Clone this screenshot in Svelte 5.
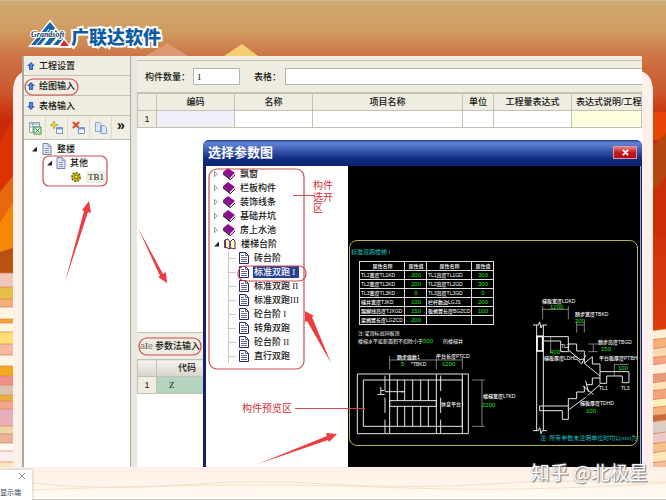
<script>
  const menu = [
    { label: '工程设置', dir: 'up' },
    { label: '绘图输入', dir: 'up' },
    { label: '表格输入', dir: 'down' }
  ]

  const books = ['飘窗', '栏板构件', '装饰线条', '基础井坑', '房上水池']
  const stairs = ['砖台阶', '标准双跑 I', '标准双跑 II', '标准双跑III', '砼台阶 I', '转角双跑', '砼台阶 II', '直行双跑']

  const params = [
    ['TL1宽度TL1KD', '200', 'TL1高度TL1GD', '300'],
    ['TL2宽度TL2KD', '200', 'TL2高度TL2GD', '300'],
    ['TL3宽度TL3KD', '0', 'TL3高度TL3GD', '0'],
    ['梯井宽度TJKD', '100', '栏杆数边LGJS', '200'],
    ['踢脚线高度TJXGD', '150', '板搁置长度BGZCD', '100'],
    ['梁搁置长度LGZCD', '200', '', '']
  ]

  const leftStripes = [
    [273, 14, '#f2c6bb'], [287, 12, '#e8bd48'], [299, 8, '#f6ae78'], [307, 12, '#fff3e2'], [319, 4, '#f5a338'],
    [323, 9, '#fff6dc'], [332, 12, '#ffde78'], [344, 11, '#f5b9a2'], [355, 11, '#fff5e6'], [366, 10, '#f5a91f'],
    [376, 9, '#f0908a'], [385, 10, '#d9c3b0'], [395, 6, '#e6b040'], [401, 8, '#f7a68e'], [409, 17, '#e9afba'],
    [426, 8, '#ecd6a6'], [434, 9, '#e9b497'], [443, 8, '#fff8f4'], [451, 11, '#fdeef0'], [462, 6, '#fbe6bd']
  ]
  const rightStripes = [
    [330, 9, '#fff0d8'], [339, 9, '#f5b07c'], [348, 9, '#fbd8b4'], [357, 7, '#f4a582'], [364, 10, '#fff0dc'],
    [374, 8, '#e89a7c'], [382, 8, '#fde2b8'], [390, 9, '#f2a57a'], [399, 8, '#fff0c0'], [407, 8, '#f3b17c'],
    [415, 6, '#c8693c'], [421, 12, '#d9cdc4'], [433, 10, '#ecc9c9'], [443, 9, '#f4c08c'], [452, 10, '#fde7b6'],
    [462, 8, '#f0bd98']
  ]
</script>

{#snippet arrow(dir)}
  <svg class="icon8 {dir}" viewBox="0 0 8 8"><path d="M4 0 8 4H6v4H2V4H0z" fill="#2f62b8" /><path d="M4 2v5" stroke="#7ea7e8" /></svg>
{/snippet}

{#snippet sheet()}
  <svg class="icon12" viewBox="0 0 12 12"><path d="M2 .5h5l3 3v8H2z" fill="#dde5f5" stroke="#7484a8" /><path d="M7 .5v3h3M4 5.500h4M4 7.500h4M4 9.500h4" fill="none" stroke="#8b9cc2" /></svg>
{/snippet}

{#snippet book()}
  <svg class="icon12" viewBox="0 0 12 12"><path d="M0 4 5 0l7 5-5 5z" fill="#8c0f90" /><path d="m0 4 7 6v2L0 6.500z" fill="#4b1252" /><path d="m7 10 5-5v2l-5 5z" fill="#e9dff0" /><path d="m7 12 5-5" stroke="#4b1252" /></svg>
{/snippet}

{#snippet page()}
  <svg class="icon12" viewBox="0 0 12 12"><path d="M1.500.500h6l3 3v8h-9z" fill="#fff" stroke="#22235f" /><path d="M7.500.500v3h3M3 5.500h6M3 7.500h6M3 9.500h6M3 3.500h3" fill="none" stroke="#3b3d7c" stroke-width=".8" /></svg>
{/snippet}

<div class="slide">
  <svg class="backdrop" viewBox="0 0 666 500" preserveAspectRatio="none" aria-hidden="true">
    <defs>
      <linearGradient id="sky" x1="0" y1="0" x2="0" y2="1">
        <stop offset="0" stop-color="#d0ab72" />
        <stop offset=".06" stop-color="#d09c62" />
        <stop offset=".12" stop-color="#cd6f42" />
        <stop offset=".18" stop-color="#cb5a30" />
        <stop offset=".24" stop-color="#cc2a08" />
        <stop offset=".3" stop-color="#c82a0c" />
        <stop offset=".7" stop-color="#df3d0c" />
      </linearGradient>
      <linearGradient id="floor" x1="0" y1="0" x2="0" y2="1">
        <stop offset="0" stop-color="#fdeee6" />
        <stop offset="1" stop-color="#fffcf2" />
      </linearGradient>
    </defs>
    <rect width="666" height="500" fill="url(#sky)" />
    <path d="M0 0h666v1H0z" fill="#c9bfa2" />
    <path d="m167 43 21 13h-42z" fill="#dc9870" />
    <path d="m242 44 16 12h-34z" fill="#f5cd72" />
    <path d="M0 140 13 120v58L0 192z" fill="#dc3206" />
    <path d="m0 192 13-16v26L0 222z" fill="#e8690c" />
    <path d="m0 222 13-20v56H0z" fill="#f58709" />
    <path d="M0 252l13-4v25H0z" fill="#b95210" />
    <path d="M640 112h26v28h-26z" fill="#ea4509" />
    <path d="m653 145 13-12v46l-13 12z" fill="#b54610" />
    <path d="m653 191 13-14v60h-13z" fill="#cc2f08" />
    {#each leftStripes as [y, h, fill]}
      <path d="M0 {y}h14v{h}H0z" {fill} />
      <path d="M0 {y}h14" stroke="#d98352" stroke-width=".7" />
    {/each}
    {#each rightStripes as [y, h, fill]}
      <path d="M650 {y + 1}l16-2v{h + 1}h-16z" {fill} />
      <path d="M650 {y + 1}l16-2" stroke="#d98352" stroke-width=".7" />
    {/each}
    <path d="M13 470V92q0-22 20-22h600q20 0 20 22v378z" fill="#fdf0eb" />
    <path d="M0 467h666v33H0z" fill="url(#floor)" />
    <path d="M30 483q80 8 150 2t150-1 160 0 176-2M30 490q90-4 180-5t200 3 256-5" fill="none" stroke="#f5e0c4" />
    <path d="M0 499h666v1H0z" fill="#c9c5bd" />
  </svg>

  <header class="brand">
    <svg class="mark" viewBox="0 0 42 28" aria-hidden="true">
      <path d="M1 26 21 1 41 27z" fill="#fff" stroke="#fff" stroke-width="2" />
      <path d="M2 25 21 2l5 6L12 25z" fill="#1762a7" />
      <path d="M15 25 27 10l3 4-9 11zM24 25l8-9 2 3-5 6z" fill="#1762a7" />
      <path d="M7 25 20 9M11 26l13-16" stroke="#fff" />
      <path d="m31 26 4-6 5 6z" fill="#df2530" />
      <text x="2" y="17">Grandsoft</text>
    </svg>
    <h1>广联达软件</h1>
  </header>

  <div class="app">
    <aside class="side">
      {#each menu as item}
        <button class="menu-item">{@render arrow(item.dir)}{item.label}</button>
      {/each}
      <div class="tools">
        <button aria-label="导出表格"><svg viewBox="0 0 14 14"><path d="M1.500 1.500h10v10h-10z" fill="#fff" stroke="#8ba7b8" /><path d="M2 3h9M2 6h9M5 2v9" stroke="#6f9db8" /><path d="M6 6h7v7H6z" fill="#e3f4df" stroke="#358a44" /><path d="m7.500 7.500 4 4m0-4-4 4" stroke="#26833a" /></svg></button>
        <button aria-label="新建"><svg viewBox="0 0 14 14"><path d="m4 0 1 3 3 1-3 1-1 3-1-3-3-1 3-1z" fill="#f5df4a" stroke="#a8901c" stroke-width=".7" /><path d="M6.500 6.500h6v6h-6z" fill="#fff" stroke="#7194cb" /><path d="M7 7.500h5" stroke="#6c9ae0" stroke-width="2" /></svg></button>
        <button aria-label="删除"><svg viewBox="0 0 14 14"><path d="m1 1 6 6m0-6L1 7" stroke="#db4a26" stroke-width="2" /><path d="M6.500 6.500h6v6h-6z" fill="#fff" stroke="#7194cb" /><path d="M7 7.500h5" stroke="#6c9ae0" stroke-width="2" /></svg></button>
        <button aria-label="复制"><svg viewBox="0 0 14 14"><path d="M1.500 1.500h4l2 2v7h-6zM6.500 4.500h4l2 2v6h-6z" fill="#dce7fa" stroke="#89a3d3" /></svg></button>
        <button class="more" aria-label="更多">»</button>
      </div>
      <ul class="tree">
        <li><i class="open"></i>{@render sheet()}整楼</li>
        <li class="lv2"><i class="open"></i>{@render sheet()}其他</li>
        <li class="lv3">
          <svg class="icon12" viewBox="0 0 12 12"><circle cx="6" cy="6" r="4" fill="#e9d91f" stroke="#756b12" stroke-width="2" stroke-dasharray="2 1" /><circle cx="6" cy="6" r="2" fill="none" stroke="#756b12" /></svg>
          <span class="current">TB1</span>
        </li>
      </ul>
    </aside>

    <main class="work">
      <div class="strip"></div>
      <div class="form">
        <label for="count">构件数量：</label>
        <input id="count" class="count" value="1" />
        <label for="sheet">表格：</label>
        <input id="sheet" class="sheet" />
      </div>
      <table class="grid">
        <colgroup><col class="c-no" /><col class="c-code" /><col class="c-code" /><col /><col class="c-unit" /><col class="c-code" /><col class="c-last" /></colgroup>
        <thead>
          <tr><th></th><th>编码</th><th>名称</th><th>项目名称</th><th>单位</th><th>工程量表达式</th><th class="cut">表达式说明/工程</th></tr>
        </thead>
        <tbody>
          <tr><th>1</th><td class="tint"></td><td></td><td></td><td></td><td></td><td class="note"></td></tr>
        </tbody>
      </table>
      <section class="param">
        <div class="param-bar"><span class="ae">a<b>I</b>e</span>参数法输入</div>
        <table class="codes">
          <colgroup><col class="c-no" /><col class="c-name" /><col /></colgroup>
          <thead><tr><th></th><th>代码</th><th></th></tr></thead>
          <tbody><tr><th>1</th><td>Z</td><td></td></tr></tbody>
        </table>
      </section>
    </main>

    <div class="dialog" role="dialog" aria-labelledby="dialog-title">
      <div class="titlebar">
        <h2 id="dialog-title">选择参数图</h2>
        <button class="close" aria-label="关闭"><svg viewBox="0 0 8 8"><path d="m1 1 6 6m0-6L1 7" stroke="#fff" stroke-width="2" /></svg></button>
      </div>
      <div class="dialog-body">
        <ul class="catalog">
          {#each books as name}
            <li><i class="shut"></i>{@render book()}{name}</li>
          {/each}
          <li>
            <i class="open"></i>
            <svg class="icon12" viewBox="0 0 12 12"><path d="m1 2 3-1 2 3 3-3 2 2v8l-4-1-1 1-5-2z" fill="#fff9bd" stroke="#55205d" /><path d="M6 4v7M1 2v8" stroke="#55205d" stroke-width="1.500" /></svg>
            楼梯台阶
          </li>
          {#each stairs as name}
            <li class="leaf">{@render page()}<span class:selected={name === '标准双跑 I'}>{name}</span></li>
          {/each}
        </ul>

        <div class="preview">
          <div class="sheet-frame">
            <h3>标准双跑楼梯 I</h3>
            <table class="values">
              <colgroup><col class="v-name" /><col class="v-num" /><col class="v-name" /><col class="v-num" /></colgroup>
              <thead><tr><th>属性名称</th><th>属性值</th><th>属性名称</th><th>属性值</th></tr></thead>
              <tbody>
                {#each params as [a, av, b, bv]}
                  <tr><td>{a}</td><td class="num">{av}</td><td>{b}</td><td class="num">{bv}</td></tr>
                {/each}
              </tbody>
            </table>
            <p>注:梁顶标高同板顶<br />楼梯水平投影面积不扣除小于<em>500</em>&emsp;&emsp;的楼梯井</p>
          </div>
          <svg class="cad" viewBox="348 166 294 301">
            <!-- plan -->
            <g transform="translate(345 335) scale(.33333)" fill="none" stroke="#e8e8e8" stroke-width="3">
              <path d="M37 117h333v179H37zM55 135h297v139H55zM352 117v179M134 117v179M274 117v179M134 197h140v17H134z" />
              <path d="M120 122v46m0 20v46m0 20v40M287 122v46m0 20v46m0 20v40" />
              <path d="M157 135v62m22-62v62m24-62v62m24-62v62m23-62v62M157 214v60m22-60v60m24-60v60m24-60v60m23-60v60" />
              <path d="M120 170h60m-8-3v6" />
              <path d="M134 75h218M134 63v40M274 63v40M352 63v40M411 135v139M381 135h39M381 274h39" stroke="#bbb" stroke-width="2" />
            </g>
            <!-- section -->
            <g transform="translate(505 290) scale(.33333)" fill="none" stroke="#e8e8e8" stroke-width="3">
              <path d="M95 105v317M115 105v317M84 105h16l4-9 4 18 4-9h14M84 422h16l4-9 4 18 4-9h14" />
              <path d="M96 139h17v44H96z" stroke="#fff" stroke-width="5" />
              <path d="M113 140h77v45h-23v-32h-54M190 162h25v21h23v18M222 210l16-4 0 14 24-20v22h23v23M190 180l36 30M238 220l47 38M216 208l14 14 12-26" />
              <path d="M285 245h87v33h-20v-20h-47v22h-20v-35M285 264h-23v20h-18M234 288l32 26M242 272l8 34M238 288v18h-23v20h-25M190 360l52-38M248 316l37-32" />
              <path d="M190 326v62h-18v-26h-68v-14h86" />
              <path d="M113 58h77M113 48v40M190 48v40M215 105h23M215 95v33M238 95v33M250 162h28M250 185h28M265 162v23M328 258v-35h44M137 140v50" stroke="#bbb" stroke-width="2" />
            </g>
            <g class="label">
              <text x="397" y="359">踏步级数1</text><text x="411" y="366">*TBKD</text>
              <text x="436" y="358">平台长度PTCD</text>
              <text x="377" y="394" class="big">上</text><text x="441" y="406">休息平台</text>
              <text x="483" y="398">楼梯宽度LTKD</text>
              <text x="542" y="303">梯板宽度LDKD</text><text x="575" y="316">踏步宽度TBKD</text>
              <text x="598" y="344">踏步高度TBGD</text><text x="599" y="360">平台板厚度PTBH</text>
              <text x="544" y="360">梯板厚度LDHD</text><text x="580" y="405">梯板厚度TDHD</text>
              <text x="561" y="348">TL2</text><text x="599" y="390">TL1</text><text x="621" y="390">TL3</text>
            </g>
            <g class="label green">
              <text x="401" y="366">5</text><text x="442" y="366">1200</text><text x="482" y="407">2200</text>
              <text x="550" y="309">1200</text><text x="575" y="323">200</text><text x="601" y="351">150</text>
              <text x="550" y="354">400</text><text x="618" y="370">100</text><text x="586" y="413">100</text>
            </g>
            <text class="remark" x="540" y="440">注: 所有参数未注明单位时均以mm为</text>
          </svg>
        </div>
      </div>
    </div>
  </div>

  <svg class="marks" width="666" height="500" viewBox="0 0 666 500">
    <g fill="none" stroke="#cf4a50" stroke-width="1.200">
      <rect x="25" y="79" width="53" height="16" rx="8" />
      <rect x="43" y="156" width="64" height="30" rx="6" />
      <rect x="139" y="338" width="62" height="17" rx="8" />
      <rect x="209" y="169" width="95" height="200" rx="8" />
      <rect x="238" y="266" width="68" height="15" rx="7" />
      <path d="M293 195.500h22M295 408.500h70" />
    </g>
    <g fill="#ea3d3f">
      <path d="m65 282 19-71-2-1 7-9 2 12-3-1z" />
      <path d="m138 228 22 48-2 1 9 6-1-11-3 2z" />
      <path d="m331 363-19-46 2-1-9-5v11l2-1z" />
      <path d="m258 464 70-24 1 2 8-8-11-1 1 3z" />
    </g>
    <text x="313" y="189">构件</text>
    <text x="313" y="201">选开</text>
    <text x="313" y="212">区</text>
    <text x="242" y="412">构件预览区</text>
  </svg>

  <div class="toast">
    <button aria-label="关闭提示"><svg viewBox="0 0 8 8"><path d="m1 1 6 6m0-6L1 7" stroke="#8c8c8c" /></svg></button>
    <span>显示端</span>
  </div>
  <div class="watermark">知乎 @北极星</div>
</div>

<style>
  :global(body) {
    margin: 0;
  }

  .slide {
    position: relative;
    display: flex;
    flex-direction: column;
    min-height: 100vh;
    overflow: hidden;
    box-sizing: border-box;
    padding: 0 24px 33px 22px;
    font-family: "Liberation Sans", "Noto Sans CJK SC", sans-serif;
    font-size: 9px;
    line-height: 14px;
    color: #151515;
  }

  .slide * {
    box-sizing: border-box;
  }

  .backdrop {
    position: absolute;
    inset: 0;
    width: 100%;
    height: 100%;
  }

  button {
    padding: 0;
    border: 0;
    background: none;
    font: inherit;
    color: inherit;
    cursor: pointer;
  }

  ul, h1, h2, h3, p {
    margin: 0;
    padding: 0;
    list-style: none;
  }

  .icon8 { width: 8px; height: 8px; flex: none; }
  .icon12 { width: 12px; height: 12px; flex: none; }
  .down { transform: rotate(180deg); }

  .brand {
    position: relative;
    display: flex;
    align-items: flex-end;
    height: 56px;
    padding: 0 0 8px 7px;
  }

  .mark {
    width: 42px;
    height: 28px;
    overflow: visible;
  }

  .mark text {
    font: italic bold 8px "Liberation Serif", serif;
    fill: #12385f;
    stroke: #fff;
    stroke-width: 2px;
    paint-order: stroke;
  }

  h1 {
    font-family: "Noto Sans CJK SC", sans-serif;
    font-size: 18px;
    font-weight: 900;
    line-height: 24px;
    color: #0d5ca3;
    -webkit-text-stroke: 4px #fff;
    paint-order: stroke fill;
  }

  .app {
    position: relative;
    display: flex;
    flex: 1;
    min-height: 411px;
    overflow: hidden;
    background: #fff;
  }

  .side {
    display: flex;
    flex-direction: column;
    width: 109px;
    border-left: 2px solid #aaa9a4;
    border-right: 1px solid #aaa9a4;
  }

  .menu-item {
    display: flex;
    align-items: center;
    gap: 4px;
    height: 20px;
    padding-left: 3px;
    border-bottom: 1px solid #c5c2b5;
    background: #efece1;
    font-weight: 500;
  }

  .tools {
    display: flex;
    height: 24px;
    border-bottom: 1px solid #c5c2b5;
    background: #f1eee3;
  }

  .tools button {
    display: grid;
    place-items: center;
    width: 22px;
    border-right: 1px solid #dddace;
  }

  .tools svg {
    width: 14px;
    height: 14px;
  }

  .tools .more {
    flex: 1;
    border: 0;
    font-size: 14px;
    font-weight: bold;
    padding-bottom: 6px;
  }

  .tree {
    padding: 2px 0 0 8px;
    font-weight: 500;
  }

  .tree li, .catalog li {
    display: flex;
    align-items: center;
    gap: 4px;
    height: 14px;
    white-space: nowrap;
  }

  .tree .lv2 { padding-left: 15px; gap: 3px; }
  .tree .lv3 { padding-left: 38px; }

  .current {
    padding: 0 2px;
    background: #efeee3;
    font-family: "Liberation Serif", serif;
    line-height: 12px;
  }

  .open, .shut {
    flex: none;
    width: 5px;
    height: 5px;
    background: #222;
    clip-path: polygon(100% 0, 100% 100%, 0 100%);
  }

  .shut {
    width: 4px;
    height: 7px;
    background: #999;
    clip-path: polygon(0 0, 100% 50%, 0 100%, 0 0, 1px 2px, 1px 5px, 3px 50%, 1px 2px);
  }

  .work {
    display: flex;
    flex: 1;
    flex-direction: column;
    min-width: 0;
    border-left: 6px solid #e9e6dc;
  }

  .strip {
    height: 5px;
    border-bottom: 1px solid #c5c2b5;
    background: #efece1;
  }

  .form {
    display: flex;
    align-items: center;
    height: 32px;
    padding-left: 8px;
    border-bottom: 1px solid #c5c2b5;
    background: #efece1;
    font-weight: 500;
    white-space: nowrap;
  }

  .form input {
    height: 17px;
    padding: 0 3px;
    border: 1px solid #b7b5ac;
    background: #fff;
    font: 9px "Liberation Serif", serif;
  }

  .form .count {
    width: 47px;
    margin: 0 14px 0 3px;
  }

  .form .sheet {
    flex: 1;
    min-width: 0;
    margin-left: 4px;
    border-right: 0;
  }

  table {
    width: 100%;
    border-collapse: collapse;
    table-layout: fixed;
  }

  .grid th, .grid td, .codes th, .codes td {
    height: 17px;
    padding: 0;
    border: 1px solid #c3c0b4;
    font-weight: 500;
    white-space: nowrap;
  }

  .grid th, .codes th {
    background: #efece1;
  }

  .c-no { width: 19px; }
  .c-code { width: 78px; }
  .c-unit { width: 31px; }
  .c-last { width: 70px; }
  .c-name { width: 61px; }
  .grid .tint { background: #efeff8; }
  .grid .note { background: #ffffdf; }
  .grid .cut { padding-left: 4px; text-align: left; }

  .param {
    height: 135px;
    margin-top: auto;
    border-top: 1px solid #c5c2b5;
  }

  .param-bar {
    display: flex;
    align-items: center;
    height: 26px;
    padding-left: 3px;
    gap: 2px;
    background: #efece1;
    font-weight: 500;
  }

  .ae {
    color: #777;
    font-size: 9px;
  }

  .ae b {
    color: #333;
    font-family: "Liberation Serif", serif;
    font-weight: normal;
  }

  .codes thead th {
    background: linear-gradient(#f6f4f0, #d8d2cc);
  }

  .codes td {
    padding-left: 12px;
    background: #b5d3c1;
    font-family: "Liberation Serif", serif;
  }

  .dialog {
    position: absolute;
    top: 84px;
    right: 0;
    bottom: 0;
    left: 181px;
    display: flex;
    flex-direction: column;
    border-radius: 6px 6px 0 0;
    background: #14216f;
  }

  .titlebar {
    display: flex;
    align-items: center;
    justify-content: space-between;
    height: 25px;
    padding: 0 5px;
    border-radius: 6px 6px 0 0;
    background: linear-gradient(#24429a, #6284d4 12%, #3c5db5 40%, #102c7e 75%, #0c256f);
  }

  h2 {
    font-size: 13px;
    line-height: 20px;
    color: #fff;
  }

  .close {
    display: grid;
    place-items: center;
    width: 24px;
    height: 13px;
    border: 1px solid #d99;
    background: linear-gradient(#e68080, #c91920 50%, #b50d12);
  }

  .close svg { width: 7px; height: 7px; }

  .dialog-body {
    display: flex;
    flex: 1;
    margin: 1px 1px 0 3px;
    background: #fff;
  }

  .catalog {
    width: 142px;
    padding: 1px 0 0 8px;
    font-weight: 500;
  }

  .catalog li {
    gap: 5px;
  }

  .catalog .leaf {
    gap: 3px;
    margin-left: 6px;
    padding-left: 18px;
    background:
      linear-gradient(#c8c8c8, #c8c8c8) 8px 0 / 1px 100% no-repeat,
      linear-gradient(#c8c8c8, #c8c8c8) 8px 7px / 8px 1px no-repeat;
  }

  .leaf span {
    padding: 0 1px;
    font-family: "Liberation Serif", "Noto Sans CJK SC", serif;
    line-height: 12px;
    white-space: pre;
  }

  .leaf .selected {
    padding-right: 4px;
    background: #26408f;
    color: #fff;
  }

  .preview {
    position: relative;
    flex: 1;
    padding: 74px 2px 20px 1px;
    border-right: 1px solid #9ca0c4;
    background: #000;
    color: #fff;
    overflow: hidden;
  }

  .sheet-frame {
    height: 206px;
    border: 1px solid #b7b44a;
    border-radius: 8px;
  }

  h3 {
    padding: 5px 0 3px 1px;
    font-size: 6px;
    font-weight: normal;
    line-height: 12px;
    color: #19c1c1;
  }

  .values {
    width: 135px;
    margin-left: 9px;
    border: 1px solid #fff;
  }

  .values th, .values td {
    height: 9px;
    padding: 0 0 0 1px;
    border: 1px solid #ddd;
    font-size: 5px;
    font-weight: 500;
    line-height: 8px;
    white-space: nowrap;
  }

  .v-name { width: 45px; }
  .v-num { width: 22px; }

  .values .num, em {
    color: #19e519;
    font-style: normal;
    font-size: 6px;
    text-align: center;
  }

  .sheet-frame p {
    padding: 4px 0 0 8px;
    font-size: 5px;
    line-height: 8px;
  }

  .cad {
    position: absolute;
    top: 0;
    left: 0;
    width: 294px;
    height: 301px;
  }

  .label {
    font-size: 5px;
    font-weight: 500;
    fill: #fff;
  }

  .big { font-size: 8px; }

  .green {
    font-size: 6px;
    fill: #19e519;
  }

  .remark {
    font-size: 6px;
    fill: #19c1c1;
  }

  .marks {
    position: absolute;
    top: 0;
    left: 0;
    pointer-events: none;
  }

  .marks text {
    font-size: 10px;
    fill: #d32f35;
  }

  .toast {
    position: absolute;
    bottom: 0;
    left: 0;
    display: flex;
    flex-direction: column;
    width: 32px;
    height: 30px;
    overflow: hidden;
    background: #fff;
    box-shadow: 0 0 3px #bbb;
    font-size: 7px;
    color: #345;
  }

  .toast button {
    align-self: flex-end;
    height: 20px;
    padding: 0 6px;
  }

  .toast svg { width: 8px; height: 8px; }

  .watermark {
    position: absolute;
    right: 18px;
    bottom: 16px;
    font-family: "Noto Sans CJK SC", sans-serif;
    font-size: 19px;
    line-height: 24px;
    color: #fff;
    text-shadow: 1px 1px 1px #777, 0 0 2px #999;
  }
</style>
